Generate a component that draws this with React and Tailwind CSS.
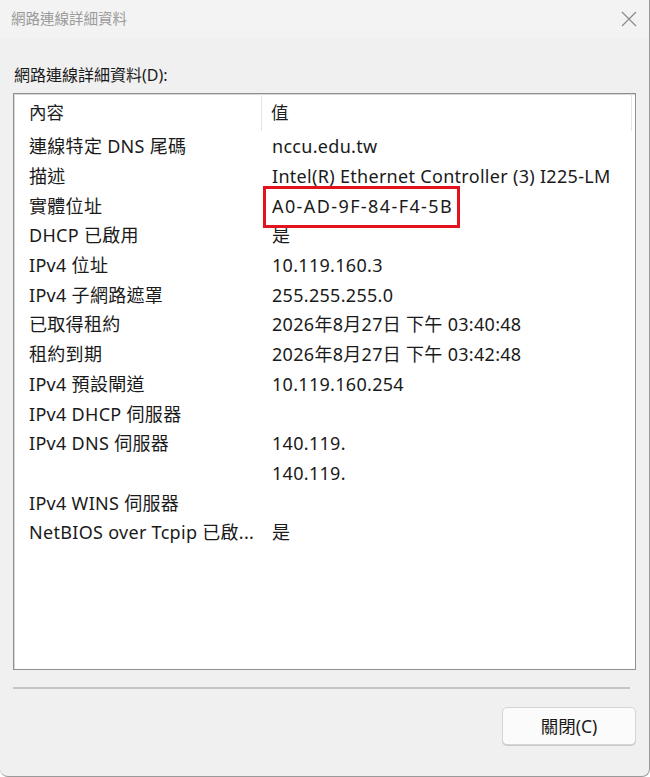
import React from 'react';

const rows = [
  ['連線特定 DNS 尾碼', 'nccu.edu.tw'],
  ['描述', 'Intel(R) Ethernet Controller (3) I225-LM'],
  ['實體位址', 'A0-AD-9F-84-F4-5B', true],
  ['DHCP 已啟用', '是'],
  ['IPv4 位址', '10.119.160.3'],
  ['IPv4 子網路遮罩', '255.255.255.0'],
  ['已取得租約', '2026年8月27日 下午 03:40:48'],
  ['租約到期', '2026年8月27日 下午 03:42:48'],
  ['IPv4 預設閘道', '10.119.160.254'],
  ['IPv4 DHCP 伺服器', ''],
  ['IPv4 DNS 伺服器', '140.119.'],
  ['', '140.119.'],
  ['IPv4 WINS 伺服器', ''],
  ['NetBIOS over Tcpip 已啟...', '是'],
];

const font = { fontFamily: '"Noto Sans", "Noto Sans CJK TC", sans-serif' };

export default function App() {
  return (
    <div
      className="w-[650px] h-[777px] bg-[#f0f0f0] flex flex-col border-r border-b border-[#9a9a9a] rounded-bl-[8px] rounded-br-[8px] overflow-hidden text-[#1a1a1a]"
      style={font}
    >
      {/* title bar */}
      <div className="h-[38px] bg-[#f3f3f3] flex items-center justify-between pl-[11px] pr-[12px]">
        <span className="text-[14.5px] text-[#9a9a9a]">網路連線詳細資料</span>
        <svg width="16" height="16" viewBox="0 0 16 16" className="text-[#8a8a8a]">
          <path d="M1 1 L15 15 M15 1 L1 15" stroke="currentColor" strokeWidth="1.2" fill="none" />
        </svg>
      </div>

      <div className="flex-1 flex flex-col px-[13px] pt-[25px]">
        <div className="text-[16px] leading-[24px] mb-[6px] pl-[1px]">網路連線詳細資料(D):</div>

        {/* list view */}
        <div className="h-[577px] bg-white border border-[#8f8f8f] shadow-[inset_1px_1px_0_#d8d8d8] flex flex-col">
          <div className="flex h-[37px] items-center mr-[3px] border-r border-[#e3e3e3]">
            <div className="w-[248px] pl-[15px] text-[17.5px] text-[#1f1f1f] border-r border-[#e3e3e3] h-full flex items-center">內容</div>
            <div className="pl-[9px] text-[17.5px] text-[#1f1f1f]">值</div>
          </div>
          <div className="flex flex-col pt-[1px]">
            {rows.map(([k, v, hl], i) => (
              <div key={i} className="flex h-[29.7px] items-center text-[18px] tracking-[0.3px]">
                <div className="w-[258px] pl-[15px] whitespace-nowrap">{k}</div>
                {hl ? (
                  <div className="relative">
                    <span className="tracking-[1.4px]">{v}</span>
                    <span className="absolute left-[-9px] top-[-7px] w-[197px] h-[42px] border-[3px] border-[#e3121f]" />
                  </div>
                ) : (
                  <div className="whitespace-nowrap">{v}</div>
                )}
              </div>
            ))}
          </div>
        </div>

        <div className="mt-[17px] h-[2px] bg-[#c6c6c6] mr-[6px]" />

        <div className="flex justify-end mt-[18px]">
          <button className="w-[134px] h-[38px] rounded-[5px] bg-[#fbfbfb] border border-[#d4d4d4] shadow-[0_1px_0_#c8c8c8] text-[17.5px] text-[#1a1a1a]">
            關閉(C)
          </button>
        </div>
      </div>
    </div>
  );
}
